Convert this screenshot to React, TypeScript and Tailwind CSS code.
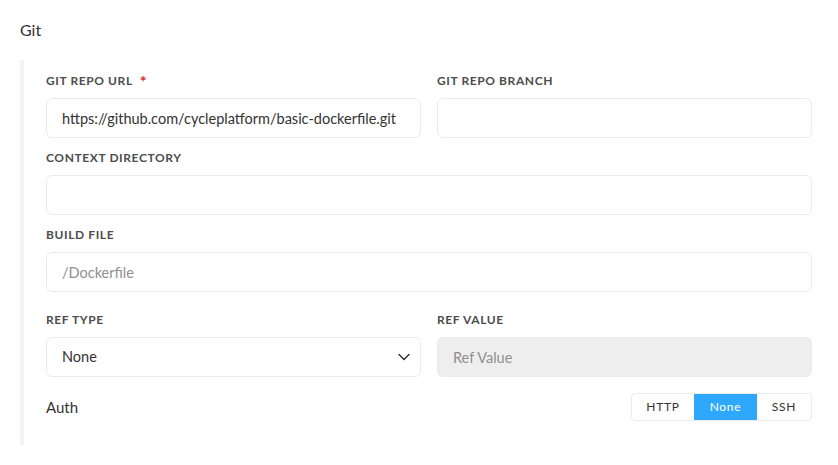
import { ChevronDown } from "lucide-react";

const font = { fontFamily: "Lato, 'Open Sans', sans-serif" };

const Label = ({ text, required }: { text: string; required?: boolean }) => (
  <div className="h-4 mb-[9px] flex items-center text-[12px] leading-4 font-bold tracking-[0.05em] text-[#4d4d4d]">
    {text}
    {required && <span className="ml-[7px] text-[16px] font-bold text-[#d9222a]">*</span>}
  </div>
);

const Field = ({
  label,
  required,
  value,
  placeholder,
  disabled,
}: {
  label: string;
  required?: boolean;
  value?: string;
  placeholder?: string;
  disabled?: boolean;
}) => (
  <div>
    <Label text={label} required={required} />
    <input
      readOnly
      defaultValue={value}
      placeholder={placeholder}
      disabled={disabled}
      style={font}
      className={
        "w-full h-10 rounded-md border border-[#ebebeb] px-[15px] text-[14.5px] text-[#333] placeholder:text-[#8f8f8f] outline-none " +
        (disabled ? "bg-[#eeeeee] placeholder:text-[#8a909a]" : "bg-white")
      }
    />
  </div>
);

export default function App() {
  return (
    <div className="w-[838px] h-[465px] bg-white px-5 pt-[18px]" style={font}>
      <div className="text-[16px] leading-6 text-[#333]">Git</div>
      <div className="mt-[18px] border-l-4 border-[#f4f4f4] pl-[22px] pr-[6px] pt-[13px] pb-[24px]">
        <div className="grid grid-cols-2 gap-x-4 gap-y-3">
          <Field label="GIT REPO URL" required value="https://github.com/cycleplatform/basic-dockerfile.git" />
          <Field label="GIT REPO BRANCH" />
          <div className="col-span-2">
            <Field label="CONTEXT DIRECTORY" />
          </div>
          <div className="col-span-2">
            <Field label="BUILD FILE" placeholder="/Dockerfile" />
          </div>
        </div>
        <div className="grid grid-cols-2 gap-x-4 mt-[20px]">
          <div>
            <Label text="REF TYPE" />
            <div className="h-10 rounded-md border border-[#ebebeb] bg-white px-[15px] flex items-center justify-between text-[14.5px] text-[#333]">
              <span>None</span>
              <ChevronDown size={20} strokeWidth={1.7} className="text-[#333] -mr-[9px]" />
            </div>
          </div>
          <Field label="REF VALUE" placeholder="Ref Value" disabled />
        </div>
        <div className="mt-[16px] flex items-center justify-between">
          <span className="text-[15px] text-[#333]">Auth</span>
          <div className="flex h-7 rounded-[4px] border border-[#ebebeb] overflow-hidden text-[12px] tracking-[0.06em]">
            <div className="w-[62px] flex items-center justify-center text-[#333]">HTTP</div>
            <div className="w-[63px] flex items-center justify-center bg-[#2ea8fc] text-white">None</div>
            <div className="w-[54px] flex items-center justify-center text-[#333]">SSH</div>
          </div>
        </div>
      </div>
    </div>
  );
}
